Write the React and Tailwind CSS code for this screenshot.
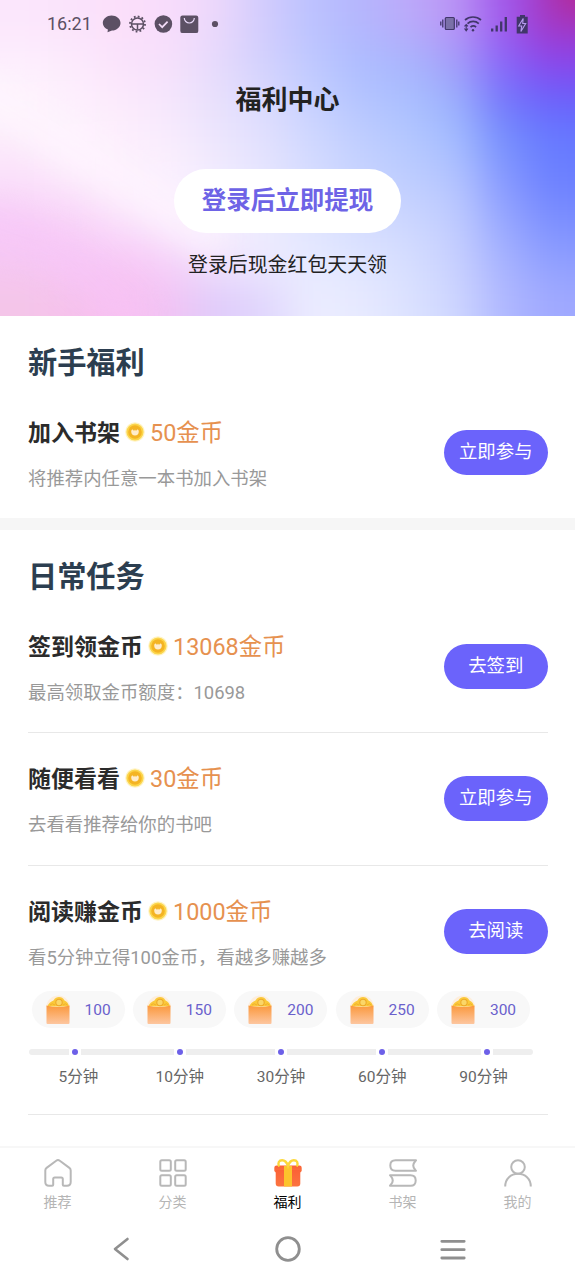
import React from 'react'

// Colour cells of the header artwork, blurred into a soft mesh
const meshRows = [
  ['#fbe6fc', '#fae3fb', '#fbdffa', '#f8dcfb', '#ecd8fb', '#d2ccfd', '#bcc2ff', '#b4b6fd', '#bcaafa', '#ba94f5', '#a058ec', '#a436c4'],
  ['#fdeefd', '#fceafc', '#fae2fb', '#f6e0fb', '#e6dafc', '#d2d0fd', '#bec8ff', '#adbcff', '#a8b4fd', '#a49cfa', '#8a64f8', '#8c44ea'],
  ['#fef5fd', '#fdf0fd', '#fceafc', '#f5e6fc', '#e8e0fc', '#dadafe', '#c6d0ff', '#b4c4ff', '#aabfff', '#9ab0fd', '#7376fc', '#6a62fc'],
  ['#fcecfb', '#fef4fe', '#fdf0fd', '#f9ecfd', '#ede6fd', '#e2e0fe', '#d0d8ff', '#c0ceff', '#b5c8ff', '#a4bcff', '#7690fd', '#667aff'],
  ['#fae0fa', '#fceafc', '#fdf0fd', '#fcf2fe', '#f2ecfe', '#e6e6fe', '#d6dcff', '#c8d4ff', '#becdff', '#b4c4ff', '#8698ff', '#6c80ff'],
  ['#f8cef8', '#f8d4f8', '#fae2fb', '#fbecfd', '#f8f0fe', '#ecebfe', '#e0e4ff', '#d4dcff', '#ccd6ff', '#c0ccff', '#96a6ff', '#7b8eff'],
  ['#f6c8f4', '#f7c8f6', '#f7c8f7', '#f6d2f9', '#f2e4fd', '#eeeafe', '#e6eaff', '#dee4ff', '#d6deff', '#c8d0ff', '#a6b2ff', '#8e9eff'],
  ['#f4c5e8', '#f6c2ec', '#f8bfef', '#f2c3f4', '#dfcbfa', '#e0d6fd', '#ebecff', '#e8eaff', '#dce2ff', '#ced6ff', '#b0b8ff', '#a0a9ff'],
]

const rewards = [
  { coins: 100, label: '5分钟' },
  { coins: 150, label: '10分钟' },
  { coins: 200, label: '30分钟' },
  { coins: 250, label: '60分钟' },
  { coins: 300, label: '90分钟' },
]

const HeaderArt = () => (
  <svg className="absolute inset-0 h-full w-full" viewBox="0 0 575 316" preserveAspectRatio="none" aria-hidden="true">
    <defs>
      <filter id="mesh" filterUnits="userSpaceOnUse" x="-100" y="-100" width="775" height="516" colorInterpolationFilters="sRGB">
        <feGaussianBlur stdDeviation="21" />
      </filter>
      <filter id="streak" filterUnits="userSpaceOnUse" x="-100" y="-100" width="775" height="516" colorInterpolationFilters="sRGB">
        <feGaussianBlur stdDeviation="16" />
      </filter>
    </defs>
    <g filter="url(#mesh)">
      {meshRows.map((row, r) =>
        row.map((color, c) => {
          const left = c === 0 ? -100 : c * 48
          const right = c === 11 ? 675 : (c + 1) * 48 + 1
          const top = r === 0 ? -100 : r * 40
          const bottom = r === 7 ? 416 : (r + 1) * 40 + 1
          return <rect key={`${r}-${c}`} x={left} y={top} width={right - left} height={bottom - top} fill={color} />
        })
      )}
      <rect x="560" y="-100" width="115" height="112" fill="#b82888" />
    </g>
    <g filter="url(#streak)" strokeWidth="30">
      <path d="M-40 80L90 160L220 245" stroke="#fff8ff" strokeOpacity=".65" fill="none" />
      <path d="M-40 215L60 250L140 325" stroke="#f7c4f8" strokeOpacity=".6" fill="none" />
    </g>
  </svg>
)

const StatusBar = () => (
  <div className="flex h-[47px] items-center justify-between pr-[45px] pl-[47px] text-[#5c5064]">
    <div className="flex items-center">
      <span className="w-[55px] text-[18px] leading-none">16:21</span>
      <svg width="120" height="22" viewBox="0 0 120 22" fill="none">
        <path d="M9.500 2.500c5 0 9 3.200 9 7.500s-4 7.500-8.500 7.600l-4.500 1.700.4-2.700C3 15.300.8 12.900.8 10c0-4.300 4.200-7.500 8.700-7.500z" fill="currentColor" />
        <circle cx="35.500" cy="11" r="6" stroke="currentColor" strokeWidth="1.500" />
        <circle cx="35.500" cy="11" r="7.500" stroke="currentColor" strokeWidth="1.800" strokeDasharray="1.800 2.128" />
        <path d="M30 11h11M35.500 11v5.500" stroke="currentColor" strokeWidth="1.500" />
        <circle cx="61.400" cy="11" r="8.800" fill="currentColor" />
        <path d="M57 11l3.200 3.200 5.400-5.600" stroke="#f3dcf8" strokeWidth="1.700" />
        <rect x="78.300" y="2.500" width="18" height="17.600" rx="2.200" fill="currentColor" />
        <path d="M82.300 5a5 5 0 0 0 10 0" stroke="#eadafa" strokeWidth="1.200" />
        <circle cx="113" cy="11" r="3.100" fill="currentColor" />
      </svg>
    </div>
    <svg width="90" height="22" viewBox="0 0 90 22" fill="none" className="text-[#41366a]">
      <rect x="5.300" y="4.500" width="9" height="12" rx="1" fill="#7a70a8" stroke="currentColor" strokeWidth="1.200" />
      <path d="M2.800 6.500v8M.8 8.500v4M16.800 6.500v8M18.800 8.500v4" stroke="currentColor" strokeWidth="1.300" />
      <path d="M25 7c4.500-4 11.500-4 16 0M27.500 10.700c3.300-3 8-3 11.300 0M30.500 14.100c1.700-1.400 4-1.400 5.600 0" stroke="currentColor" strokeWidth="1.700" />
      <circle cx="33" cy="17.300" r="1.200" fill="currentColor" />
      <path d="M26.200 11.500v6M24.500 15.500l1.700 2.300 1.700-2.300M24.500 13.300l1.700-1.800 1.700 1.800" stroke="currentColor" strokeWidth="1.100" />
      <path d="M52.200 15.500v3M56.700 12.500v6M61.200 8.500v10M65.800 4v14.500" stroke="currentColor" strokeWidth="2.300" />
      <path d="M80 2h5v1.800h2.700v16.700h-11V3.800H80z" fill="currentColor" />
      <path d="M83.200 5.500l-4.500 7.500h3l-.8 5.500 4.800-8h-3z" fill="#41366a" stroke="#b79bf0" strokeWidth="1.100" />
    </svg>
  </div>
)

const CoinIcon = () => (
  <svg width="20" height="20" viewBox="0 0 20 20">
    <circle cx="10" cy="10" r="9.800" fill="#fff3c4" />
    <circle cx="10" cy="10" r="8.600" fill="#fbd54a" />
    <circle cx="10" cy="10" r="6.800" fill="#f4b423" />
    <path d="M6.200 9.500q0-2.300 1.700-2l1.100 1.400 1-1.300 1 1.300 1.100-1.400q1.700-.3 1.700 2c0 2.500-1.500 4-3.800 4s-3.800-1.500-3.800-4z" fill="#ffeccb" />
  </svg>
)

const EnvelopeIcon = () => (
  <svg width="24" height="30" viewBox="0 0 24 30">
    <defs>
      <linearGradient id="envelope" x1="0" y1="0" x2="0" y2="1">
        <stop offset="0" stopColor="#fb983c" />
        <stop offset="1" stopColor="#fdc6a0" />
      </linearGradient>
    </defs>
    <path d="M0 12C1 5 6 .5 12.500.5S24 6 24 12z" fill="#fdeedd" />
    <path d="M1.500 11.500C2 8.500 5 6.500 7.500 5.500 9 2.800 11 2 13 2s4.500 1 5.500 3.500c2.500 1 4 3 4.500 6z" fill="#fbc93a" />
    <circle cx="13" cy="7.500" r="3.200" fill="#fbd668" stroke="#eda92a" strokeWidth="1.100" />
    <path d="M4 10q2-2.500 5 0M17 10q2.500-2.500 4.500 0" stroke="#f2b02c" fill="none" />
    <path d="M.5 10.500q11.500 3 23 0V28q0 1-1 1h-21q-1 0-1-1z" fill="url(#envelope)" />
  </svg>
)

const Button = ({ children }) => (
  <button className="mt-[13px] h-[45px] w-[104.500px] shrink-0 rounded-full bg-[#6b63fb] pb-[2px] text-[18.400px] text-white">
    {children}
  </button>
)

const Task = ({ title, reward, desc, action, className = '', children }) => (
  <div className={className}>
    <div className="flex items-start justify-between pt-[9px]">
      <div>
        <div className="flex h-[34px] items-center">
          <h3 className="text-[23px] font-bold text-[#2b2b2b]">{title}</h3>
          <span className="mr-[5px] mb-[4px] ml-[5px]"><CoinIcon /></span>
          <span className="text-[23.400px] text-[#e6914f]">{reward}</span>
        </div>
        <p className="mt-[13px] text-[18.400px] leading-[30px] text-[#999]">{desc}</p>
      </div>
      <Button>{action}</Button>
    </div>
    {children}
  </div>
)

const Dot = () => (
  <span className="flex w-3 shrink-0 justify-center">
    <span className="h-[6px] w-[6px] rounded-full bg-[#6d60e8]" />
  </span>
)

const ReadingProgress = () => (
  <div>
    <div className="mt-[18px] ml-[3.500px] grid w-[498.500px] grid-cols-5 gap-x-[8.300px]">
      {rewards.map(({ coins }) => (
        <div key={coins} className="flex h-[37px] items-center rounded-full bg-[#f8f8f8] pl-[14px]">
          <EnvelopeIcon />
          <span className="mt-[2px] ml-[15px] text-[15.500px] text-[#6a60cc]">{coins}</span>
        </div>
      ))}
    </div>
    <div className="mt-[21px] ml-[1px] flex h-[6px] w-[503.500px]">
      <span className="w-10 rounded-l-full bg-[#eee]" />
      <Dot />
      <span className="w-[92.500px] bg-[#eee]" />
      <Dot />
      <span className="w-[89.500px] bg-[#eee]" />
      <Dot />
      <span className="w-[89px] bg-[#eee]" />
      <Dot />
      <span className="w-[93px] bg-[#eee]" />
      <Dot />
      <span className="flex-1 rounded-r-full bg-[#eee]" />
    </div>
    <div className="mt-[11px] ml-1 grid w-[498px] grid-cols-5 gap-x-[8.300px] text-center text-[15.500px] leading-[22px] text-[#666]">
      {rewards.map(({ label }) => <span key={label}>{label}</span>)}
    </div>
  </div>
)

const GiftIcon = () => (
  <svg width="28" height="28" viewBox="0 0 28 28">
    <defs>
      <linearGradient id="gift" x1="0" y1="0" x2="0" y2="1">
        <stop offset="0" stopColor="#fb6236" />
        <stop offset="1" stopColor="#fb7440" />
      </linearGradient>
    </defs>
    <rect x=".3" y="6.500" width="27.400" height="7" rx="2.300" fill="url(#gift)" />
    <path d="M1.700 11h24.600v13.500a3 3 0 0 1-3 3H4.700a3 3 0 0 1-3-3z" fill="url(#gift)" />
    <path d="M10 7h8v20.500h-8z" fill="#fcc32c" />
    <path d="M5.200 7.500c-2-3.500 0-6.300 3-6.300 3.300 0 4.800 2.800 5.800 5.600 1-2.800 2.500-5.600 5.800-5.600 3 0 5 2.800 3 6.300" fill="none" stroke="#fcd83a" strokeWidth="2.400" />
  </svg>
)

const LineIcon = ({ children }) => (
  <svg width="28" height="28" viewBox="0 0 28 28" fill="none" stroke="#b8b8b8" strokeWidth="2" strokeLinejoin="round">
    {children}
  </svg>
)

const tabs = [
  {
    label: '推荐',
    icon: (
      <LineIcon>
        <path d="M1.300 11.500q0-1.600 1.300-2.600L12.200 1.700q1.800-1.300 3.600 0l9.600 7.200q1.300 1 1.300 2.600V23q0 3.700-3.700 3.700h-3.200q-1 0-1-1V20q0-1.500-1.500-1.500h-6.600q-1.500 0-1.500 1.500v5.700q0 1-1 1H5q-3.700 0-3.700-3.700z" />
      </LineIcon>
    ),
  },
  {
    label: '分类',
    icon: (
      <LineIcon>
        <rect x="1.300" y="1.300" width="10.500" height="10.500" rx="1.500" />
        <rect x="16.200" y="1.300" width="10.500" height="10.500" rx="1.500" />
        <rect x="1.300" y="16.200" width="10.500" height="10.500" rx="1.500" />
        <rect x="16.200" y="16.200" width="10.500" height="10.500" rx="1.500" />
      </LineIcon>
    ),
  },
  { label: '福利', icon: <GiftIcon />, active: true },
  {
    label: '书架',
    icon: (
      <LineIcon>
        <path d="M27 1.300H6.500Q1.300 1.300 1.300 6.500t5.200 5.300H27l-1-1.300q-3.500-4 0-8z" />
        <path d="M1 16.200h20.500q5.200 0 5.200 5.300t-5.200 5.200H1l1-1.300q3.500-4 0-8z" />
      </LineIcon>
    ),
  },
  {
    label: '我的',
    icon: (
      <LineIcon>
        <circle cx="14" cy="8" r="6.800" />
        <path d="M1.200 27.500C1.200 19.500 7 14.800 14 14.800s12.800 4.700 12.800 12.700" />
      </LineIcon>
    ),
  },
]

const TabBar = () => (
  <nav className="grid h-[72px] grid-cols-5 border-t-2 border-[#f7f7f7] pt-[11px]">
    {tabs.map(({ label, icon, active }) => (
      <div key={label} className="flex flex-col items-center">
        {icon}
        <span className={`mt-[5px] text-[14px] leading-5 ${active ? 'text-black' : 'text-[#b5b5b5]'}`}>{label}</span>
      </div>
    ))}
  </nav>
)

const SystemNav = () => (
  <div className="flex h-[62px] items-center justify-between pr-[109px] pl-[112px]">
    <svg width="18" height="26" viewBox="0 0 18 26" fill="none" stroke="#8f8f8f" strokeWidth="2.600" strokeLinecap="round" strokeLinejoin="round">
      <path d="M15.500 3L3 13l12.500 10" />
    </svg>
    <svg width="26" height="26" viewBox="0 0 26 26" fill="none" stroke="#8f8f8f" strokeWidth="2.800" className="ml-[5px]">
      <circle cx="13" cy="13" r="11.300" />
    </svg>
    <svg width="26" height="26" viewBox="0 0 26 26" stroke="#8f8f8f" strokeWidth="2.800" strokeLinecap="round">
      <path d="M1.800 5.300h22.400M1.800 13.700h22.400M1.800 22h22.400" />
    </svg>
  </div>
)

const SectionTitle = ({ children }) => (
  <h2 className="flex h-[92px] items-center pt-[4px] text-[29.200px] font-bold text-[#2c3e50]">{children}</h2>
)

export default function App() {
  return (
    <div className="min-h-[1280px] w-[575px] overflow-hidden bg-white font-[Roboto,'Noto_Sans_CJK_SC',sans-serif]">
      <header className="relative h-[316px] overflow-hidden">
        <HeaderArt />
        <div className="relative flex flex-col">
          <StatusBar />
          <h1 className="mt-[33px] text-center text-[26px] leading-10 font-bold text-[#222]">福利中心</h1>
          <button className="mx-auto mt-[49px] h-16 w-[227px] rounded-full bg-white text-[24.500px] font-bold text-[#6e63e6]">
            登录后立即提现
          </button>
          <p className="mt-[18px] text-center text-[19.900px] leading-[30px] text-[#222]">登录后现金红包天天领</p>
        </div>
      </header>

      <section className="h-[202px] px-7 pr-[27px]">
        <SectionTitle>新手福利</SectionTitle>
        <Task title="加入书架" reward="50金币" desc="将推荐内任意一本书加入书架" action="立即参与" />
      </section>
      <div className="h-3 bg-[#f6f6f6]" />
      <section className="h-[616px] px-7 pr-[27px]">
        <SectionTitle>日常任务</SectionTitle>
        <Task className="h-[111px] border-b border-[#e8e8e8]" title="签到领金币" reward="13068金币" desc="最高领取金币额度：10698" action="去签到" />
        <Task className="mt-[21px] h-[112px] border-b border-[#e8e8e8]" title="随便看看" reward="30金币" desc="去看看推荐给你的书吧" action="立即参与" />
        <Task className="mt-[21px] h-[228px] border-b border-[#e8e8e8]" title="阅读赚金币" reward="1000金币" desc="看5分钟立得100金币，看越多赚越多" action="去阅读">
          <ReadingProgress />
        </Task>
      </section>

      <TabBar />
      <SystemNav />
    </div>
  )
}
